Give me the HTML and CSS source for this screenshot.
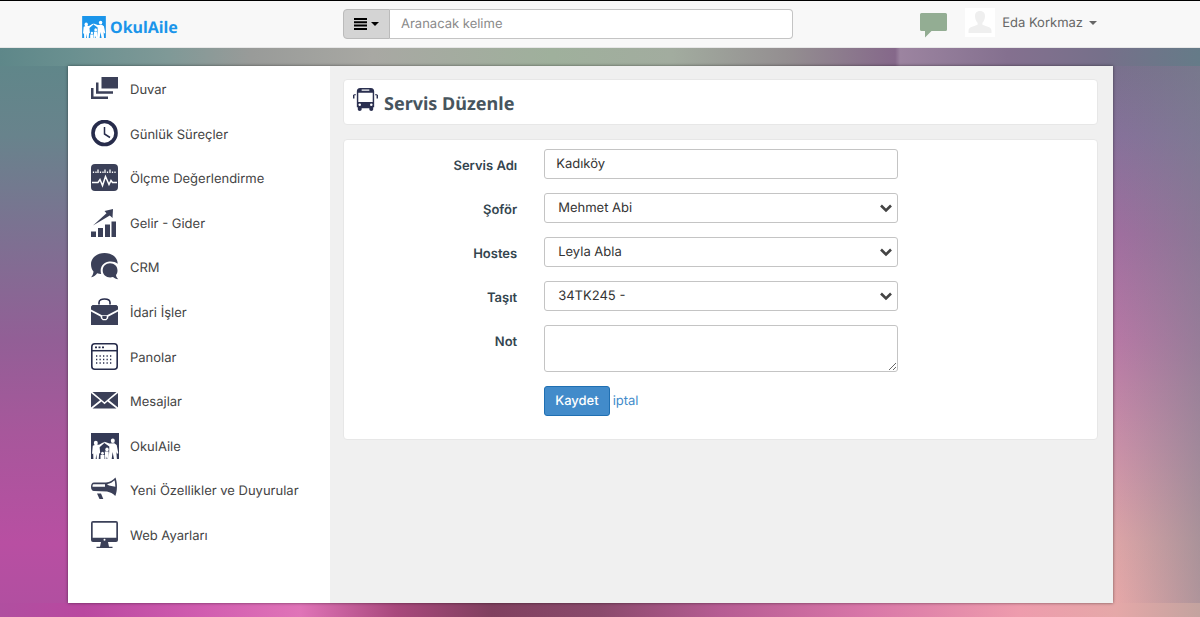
FILE: index.html
```html
<!DOCTYPE html>
<html lang="tr">
<head>
<meta charset="utf-8">
<meta name="viewport" content="width=device-width, initial-scale=1">
<title>Servis Düzenle - OkulAile</title>
<link rel="stylesheet" href="styles.css">
</head>
<body>
<svg class="defs" aria-hidden="true">
  <symbol id="family" viewBox="0 0 28 26">
    <path fill="currentColor" d="M0 0h28v26H0z"/>
    <g fill="#fff">
      <ellipse cx="4.800" cy="10" rx="2" ry="2.300"/><ellipse cx="21.800" cy="7.800" rx="2" ry="2.200"/>
      <path d="M1.800 12.800 5 11.500l3 .3 4.500-2.600.8.900-4.700 4.200.6 5.700-1 .4-.5 5.600H5.800l-.5-5-.6 5H2.400l-.2-5.500-1.200.6z"/>
      <path d="M18.500 10.500 13.500 8.800l-.5 1 5.300 3.700-.1 5.300L17.500 26h3.200l.9-7 1.400 7h2.900l-.6-7.500.7 2.200 1.300-.5-1.600-8.200-2.400-1.700z"/>
      <ellipse cx="16" cy="16.500" rx="1.700" ry="1.900"/><ellipse cx="11.500" cy="20.200" rx="1.400" ry="1.500"/>
      <path d="M13.800 18.600h3.800l.4 7.400h-1.600l-.5-2.600-.5 2.600h-1.200zM9.500 22h4v4h-4z"/>
    </g>
  </symbol>
</svg>

<header class="navbar">
  <a class="brand" href="#"><svg class="brand-mark"><use href="#family"/></svg>OkulAile</a>
  <form class="search">
    <button class="search-menu" type="button" aria-label="Arama türü">
      <svg width="13" height="12" viewBox="0 0 13 12"><path d="M0 1h13M0 4.300h13M0 7.600h13M0 11h13" stroke="#000" stroke-width="2"/></svg>
      <span class="caret"></span>
    </button>
    <input class="search-input" type="search" placeholder="Aranacak kelime" aria-label="Aranacak kelime">
  </form>
  <nav class="account">
    <a class="chat" href="#" aria-label="Sohbet"><svg width="27" height="25" viewBox="0 0 27 25"><path fill="#93ad93" d="M1.500 0h24A1.500 1.500 0 0 1 27 1.500v15a1.500 1.500 0 0 1-1.500 1.500H11.500L5 24.500V18H1.500A1.500 1.500 0 0 1 0 16.500v-15A1.500 1.500 0 0 1 1.500 0z"/></svg></a>
    <a class="user" href="#"><svg class="avatar" viewBox="0 0 30 29"><path fill="#fff" d="M0 0h30v29H0z"/><path fill="#efefef" d="M15 3c3.500 0 5.200 2.300 5 5.500-.2 3-1.300 5-2.600 6.200v2l6.800 2.600c1.600.7 2.300 2 2.300 3.700v2H3.500v-2c0-1.700.7-3 2.300-3.700l6.800-2.600v-2C11.300 13.500 10.200 11.500 10 8.500 9.800 5.300 11.500 3 15 3z"/></svg>Eda Korkmaz<span class="caret"></span></a>
  </nav>
</header>

<div class="page">
  <nav class="sidebar">
    <ul class="menu">
      <li><a href="#"><svg viewBox="0 0 28 28"><path d="M10.500 2H27v11.500H10.500zM5 7.500h2.500v8.700H22v2.600H5zM0 13h2.500v8.500H17V24H0z"/></svg>Duvar</a></li>
      <li><a href="#"><svg viewBox="0 0 28 28"><circle class="line" cx="13.500" cy="13" r="11.500" stroke-width="3.600"/><path class="line" stroke-width="1.500" d="M13.500 7v7l5.500 3.500"/></svg>Günlük Süreçler</a></li>
      <li><a href="#"><svg viewBox="0 0 28 28"><rect y="0" width="27" height="27" rx="4"/><path fill="none" stroke="#fff" stroke-width="1.300" d="M2.500 9V7.500M5 9V7.500M7 9V5.500M9.500 9V7.500M12 9V7.500M14 9V5.500M16.500 9V7.500M19 9V5.500M21.500 9V7.500M24 9V7.500"/><path fill="none" stroke="#fff" stroke-width="1.500" d="M1 18.500h6l2-3 2.500 6 3-9 3.500 8 2-4 1.500 2H26"/></svg>Ölçme Değerlendirme</a></li>
      <li><a href="#"><svg viewBox="0 0 28 28"><path d="M0 22.500h5V28H0zM7 19h5v9H7zM14 15.500h5V28h-5zM20.500 12.500h4.500V28h-4.500zM2 16.500 15.500 4.300 13.500 2l8.500-2-.5 9-2.700-2.500z"/></svg>Gelir - Gider</a></li>
      <li><a href="#"><svg viewBox="0 0 28 28"><path d="M13.500 0C21 0 26.500 4.500 26.700 10.700 24 8.700 20.500 8 17 8.800c-6 1.500-8.500 6.700-6.800 12.200-1.500-.1-2.700-.3-4-.8C5 22 3 23.800 0 24.300c1.600-1.700 2.400-3.700 2.500-5.800C.8 16.500 0 14 0 11.200 0 4.800 6 0 13.500 0z"/><path d="M19 10.300c4.300 0 7.500 3 7.500 7.200 0 1.700-.5 3.200-1.500 4.400.2 1.600.9 3.100 2.300 4.300-2.300-.1-4-1-5.300-2.200-5.500 1.600-10.300-1.700-10.300-6.500 0-4.200 3.200-7.200 7.300-7.200z"/></svg>CRM</a></li>
      <li><a href="#"><svg viewBox="0 0 28 28"><path class="line" stroke-width="1.600" d="M8 6.500V4.500C8 1.500 11 1 13.500 1s5.500.5 5.500 3.500v2"/><path d="M1.500 7h24L27 8.500v3l-11 5.700h-5L0 11.500v-3zM0 13.500 9.800 18.700v1.500l2 2h3.400l2-2v-1.500L27 13.500V27H0z"/><path d="M11.300 18h4.400v2l-.9.900h-2.600l-.9-.9z"/></svg>İdari İşler</a></li>
      <li><a href="#"><svg viewBox="0 0 28 28"><rect class="line" x=".8" y=".8" width="25.400" height="25.400" rx="3" stroke-width="1.600"/><path class="line" stroke-width="1.500" d="M1 7.700h25"/><path class="line" stroke-width="1.800" stroke-dasharray="2 1.500" d="M4 4.300h9"/><path class="line" stroke-width="1.300" stroke-dasharray="1.300 2.200" d="M5 13h16M5 16.500h16M5 20h16"/></svg>Panolar</a></li>
      <li><a href="#"><svg viewBox="0 0 28 28"><path d="M1.500 5h24L16.700 12.500l-3.200 2.700-3.200-2.700zM0 6l9 7.200L0 20.500zM27 6v14.500l-9-7.300zM1.500 21.500l9-7 3 2.700 3-2.700 9 7z"/></svg>Mesajlar</a></li>
      <li><a href="#"><svg viewBox="0 0 28 28"><use href="#family" width="28" height="28"/></svg>OkulAile</a></li>
      <li><a href="#"><svg viewBox="0 0 28 28"><path d="M15 6.500C19 6 21.500 4.500 24.500 1.500 26.500 7 26.500 15 24.300 20c-2.500-2.500-5-3.800-8.300-4.500L3 15c-2 0-3-1.500-3-4.200S1 6.500 3 6.500zM6 17.500h4l2.300 5.500H8.500z"/><path fill="#fff" d="M2.500 8.300H14v2.400H1.500c0-1.500.2-2.400 1-2.400zM16 8.300c3.500-.7 5.500-2 7.500-4 .6 2 .8 4.500.8 6.500L18 9.500z"/></svg>Yeni Özellikler ve Duyurular</a></li>
      <li><a href="#"><svg viewBox="0 0 28 28"><path fill-rule="evenodd" d="M2 0h23a2 2 0 0 1 2 2v17a2 2 0 0 1-2 2h-8l1 4.800h3.500V27H5.500v-1.200H9L10 21H2a2 2 0 0 1-2-2V2a2 2 0 0 1 2-2zM1.700 1.700v15h23.600v-15z"/><circle cx="13.500" cy="18.800" r="1" fill="#fff"/></svg>Web Ayarları</a></li>
    </ul>
  </nav>

  <main class="content">
    <section class="card title-card">
      <svg class="bus" viewBox="0 0 26 25"><path fill-rule="evenodd" d="M7.500.5h11C21 .5 22 2 22 4v16.500h-1V23q0 1.500-2 1.500T17 23v-1.500H9V23q0 1.500-2 1.500T5 23v-2.500H4V4C4 2 5 .5 7.500.5zM5.500 5.500V15h15V5.500zM9 2v1.500h8V2z"/><circle cx="7" cy="18" r="1.300" fill="#fff"/><circle cx="19" cy="18" r="1.300" fill="#fff"/><path d="M0 7.500h1.500v4H0zM24.500 7.500H26v4h-1.500zM1 7h2v1H1zM23 7h2v1h-2z"/></svg>
      <h1>Servis Düzenle</h1>
    </section>

    <form class="card form">
      <label for="name">Servis Adı</label>
      <input class="control" id="name" type="text" value="Kadıköy">
      <label for="driver">Şoför</label>
      <select class="control" id="driver"><option>Mehmet Abi</option></select>
      <label for="hostess">Hostes</label>
      <select class="control" id="hostess"><option>Leyla Abla</option></select>
      <label for="vehicle">Taşıt</label>
      <select class="control" id="vehicle"><option>34TK245 -</option></select>
      <label for="note">Not</label>
      <textarea class="control" id="note"></textarea>
      <div class="actions"><button class="save" type="submit">Kaydet</button><a href="#">iptal</a></div>
    </form>
  </main>
</div>
</body>
</html>
```

FILE: styles.css
```css
* { box-sizing: border-box; }

body {
  margin: 0;
  min-height: 100vh;
  display: flex;
  flex-direction: column;
  font: 13px/20px Inter, "Liberation Sans", sans-serif;
  text-rendering: geometricPrecision;
  color: #444;
  background:
    linear-gradient(90deg, #5e8789, #6a9090 6%, #7f9997 14%, #999b99 21%, #a8a8a3 31%, #9fb09c 46%, #a2ac9f 56%, #938d90 66%, #85688a 74.6%, #9c84a0 75%, #84708f 84%, #76708a 92%, #657b88) 0 48px / 100% 18px no-repeat,
    linear-gradient(90deg, #b04fa0, #b948a0 7%, #d15db0 17%, #e074b8 25%, #a8487c 33%, #80405f 41%, #8a4a6c 50%, #b65c93 60%, #d876a8 72%, #ee9cad 85%, #e5a8a8 93%, #c3a39f) 0 100% / 100% 14px no-repeat,
    linear-gradient(180deg, #5e8789 8%, #68838c 22%, #7a7391 36%, #925f96 55%, #a7579b 70%, #b84fa2 88%, #b04fa0) 0 0 / 68px 100% no-repeat,
    linear-gradient(90deg, transparent, rgba(118, 128, 140, .5)) 100% 0 / 87px 100% no-repeat,
    linear-gradient(180deg, #76708a 8%, #86719a 22%, #a06e9f 38%, #b778a5 55%, #ca8fa8 72%, #dea5a7 88%, #eaa9a9) 100% 0 / 87px 100% no-repeat,
    #9c84a0;
}

button, input, select, textarea { font: inherit; text-rendering: inherit; }

a { color: #428bca; text-decoration: none; }

.defs { position: absolute; width: 0; height: 0; }

.navbar {
  display: flex;
  align-items: center;
  height: 48px;
  padding: 0 103px 0 82px;
  border-top: 1px solid #000;
  border-bottom: 1px solid #e7e7e7;
  background: #f8f8f8;
}

.brand {
  display: flex;
  align-items: center;
  gap: 4px;
  width: 261px;
  padding-top: 6px;
  color: #1b95ea;
  font: bold 16px/22px "Noto Sans", sans-serif;
}

.brand-mark { width: 24px; height: 22px; }

.search { display: flex; width: 450px; height: 30px; }

.search-menu {
  display: flex;
  align-items: center;
  justify-content: center;
  gap: 4px;
  width: 47px;
  padding: 0;
  border: 1px solid #bbb;
  border-radius: 4px 0 0 4px;
  background: #d4d4d4;
  color: #000;
}

.search-input {
  flex: 1;
  min-width: 0;
  padding: 0 11px;
  border: 1px solid #c4c4c4;
  border-left: 0;
  border-radius: 0 4px 4px 0;
  background: #fff;
}

.search-input::placeholder { color: #8a8a8a; }

.caret {
  border: 4px solid transparent;
  border-top-color: currentColor;
  border-bottom: 0;
}

.account {
  display: flex;
  align-items: center;
  gap: 18px;
  margin-left: auto;
  padding-bottom: 3px;
}

.chat { display: flex; padding-top: 5px; }

.user { display: flex; align-items: center; gap: 6px; color: #666; }

.avatar { width: 30px; height: 29px; margin-right: 1px; }

.page {
  flex: 1;
  display: flex;
  margin: 18px 87px 14px 68px;
  background: #f0f0f0;
  box-shadow: 0 0 3px rgba(0, 0, 0, .5);
}

.sidebar { display: flex; width: 262px; background: #fff; }

.menu {
  flex: 1;
  display: flex;
  flex-direction: column;
  justify-content: space-between;
  margin: 0;
  padding: 2px 0 45px 23px;
  list-style: none;
}

.menu a {
  display: flex;
  align-items: center;
  gap: 11px;
  height: 44px;
  color: #444;
}

.menu svg {
  width: 28px;
  height: 28px;
  margin-bottom: 2px;
  fill: #3b4058;
  color: #343a56;
}

.menu .line { fill: none; stroke: #272c4b; }

.content { flex: 1; padding: 13px 15px 13px 13px; }

.card {
  border: 1px solid #e7e7e7;
  border-radius: 4px;
  background: #fff;
}

.title-card {
  display: flex;
  align-items: center;
  gap: 6px;
  height: 46px;
  margin-bottom: 14px;
  padding: 0 9px;
}

.bus { width: 25px; height: 25px; margin-bottom: 6px; fill: #2b3050; }

h1 {
  margin: 0;
  padding-top: 4px;
  color: #47555e;
  font: bold 18px/24px "Noto Sans", sans-serif;
}

.form {
  display: grid;
  grid-template-columns: 23% 47%;
  gap: 14px 27px;
  padding: 9px 0 23px;
}

label {
  padding-top: 7px;
  color: #34454f;
  font-weight: 600;
  text-align: right;
}

.control {
  width: 100%;
  height: 30px;
  padding: 0 11px;
  border: 1px solid #c4c4c4;
  border-radius: 3px;
  background: #fff;
  color: #333;
}

select.control {
  appearance: none;
  padding-left: 13px;
  background: #fff url("data:image/svg+xml,%3Csvg xmlns='http://www.w3.org/2000/svg' width='14' height='9'%3E%3Cpath d='M2 1.500l5 5 5-5' fill='none' stroke='%23444' stroke-width='2.600'/%3E%3C/svg%3E") right 4px center no-repeat;
}

textarea.control { display: block; height: 47px; resize: vertical; }

.actions { grid-column: 2; display: flex; align-items: center; gap: 3px; }

.save {
  height: 30px;
  padding: 0 10px;
  border: 1px solid #1f6fb2;
  border-radius: 3px;
  background: #428bca;
  color: #fff;
  font-weight: 500;
}
```
